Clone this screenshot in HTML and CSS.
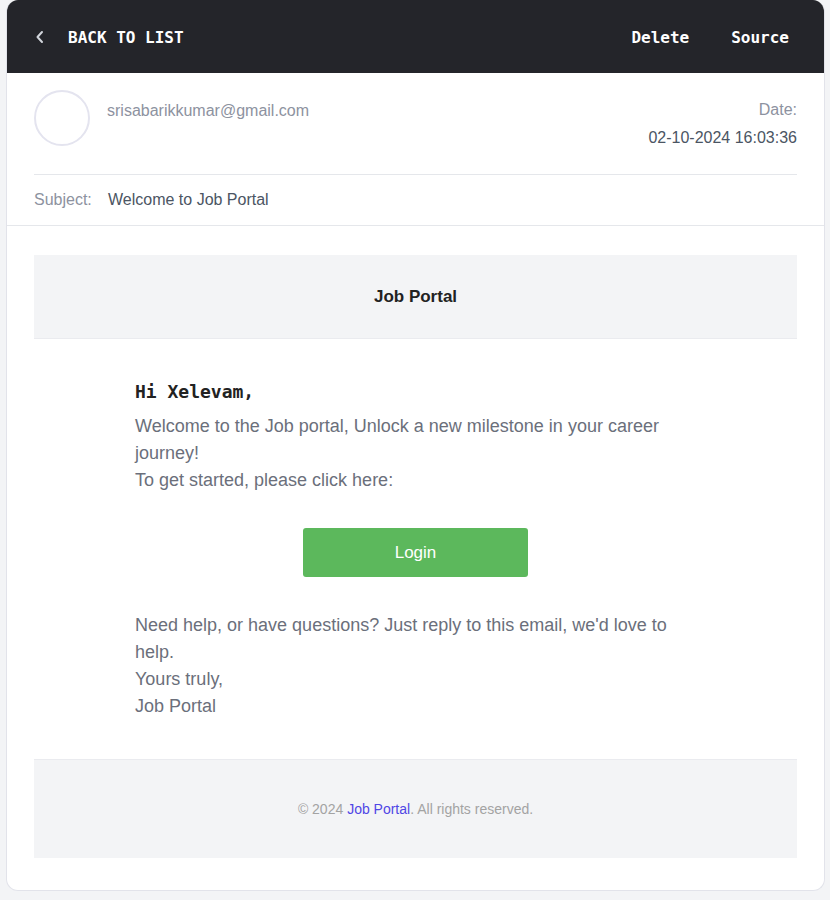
FILE: index.html
```html
<!DOCTYPE html>
<html>
<head>
<meta charset="utf-8">
<link rel="stylesheet" href="styles.css">
</head>
<body>
<div class="card">
  <div class="topbar">
    <a class="back">
      <svg class="chev" width="10" height="14" viewBox="0 0 10 14"><path d="M7 2 L2.5 7 L7 12" fill="none" stroke="#d1d5db" stroke-width="2" stroke-linecap="round" stroke-linejoin="round"/></svg>
      <span>BACK TO LIST</span>
    </a>
    <div class="actions">
      <span>Delete</span>
      <span>Source</span>
    </div>
  </div>
  <div class="meta">
    <div class="from-row">
      <div class="avatar"></div>
      <div class="from">srisabarikkumar@gmail.com</div>
      <div class="date">
        <div class="date-label">Date:</div>
        <div class="date-value">02-10-2024 16:03:36</div>
      </div>
    </div>
    <div class="subject-row">
      <span class="subject-label">Subject:</span>
      <span class="subject-value">Welcome to Job Portal</span>
    </div>
  </div>
  <div class="mail">
    <div class="mail-head">Job Portal</div>
    <div class="mail-body">
      <div class="greet">Hi Xelevam,</div>
      <p class="txt">Welcome to the Job portal, Unlock a new milestone in your career journey!<br>To get started, please click here:</p>
      <div class="btn-wrap"><a class="btn">Login</a></div>
      <p class="txt">Need help, or have questions? Just reply to this email, we'd love to help.<br>Yours truly,<br>Job Portal</p>
    </div>
    <div class="mail-foot"><span>© 2024 <a class="link">Job Portal</a>. All rights reserved.</span></div>
  </div>
</div>
</body>
</html>
```
FILE: styles.css
```css
html, body { margin: 0; padding: 0; }
body {
  background: #f3f4f6;
  font-family: "Liberation Sans", Arial, sans-serif;
  width: 830px;
  height: 900px;
}
.card {
  margin: 0 5px 0 6px;
  background: #fff;
  border: 1px solid #e2e3ea;
  border-top: none;
  border-radius: 12px;
  overflow: hidden;
  height: 891px;
  box-sizing: border-box;
}
.topbar {
  height: 73px;
  background: #24252a;
  display: flex;
  align-items: center;
  justify-content: space-between;
  padding: 0 35px 0 28px;
  font-family: "DejaVu Sans Mono", "Liberation Mono", monospace;
  font-weight: bold;
  font-size: 16px;
  color: #fff;
}
.back { display: flex; align-items: center; gap: 23px; padding-top: 1px; }
.chev { display: block; }
.actions { display: flex; gap: 42px; padding-top: 1px; }
.meta { padding: 0 27px 0 27px; border-bottom: 1px solid #e5e7eb; }
.from-row {
  display: flex;
  align-items: flex-start;
  padding-top: 17px;
  height: 84px;
  border-bottom: 1px solid #e5e7eb;
}
.avatar {
  width: 52px; height: 52px;
  border: 2px solid #e4e4ef;
  border-radius: 50%;
  flex: none;
}
.from {
  margin-left: 17px;
  margin-top: 12px;
  font-size: 16px;
  color: #8d92a0;
  flex: 1;
}
.date { text-align: right; font-size: 16px; line-height: 28px; margin-top: 6px; }
.date-label { color: #8d92a0; }
.date-value { color: #4b5563; }
.subject-row { height: 50px; display: flex; align-items: center; font-size: 16px; }
.subject-label { color: #8d92a0; width: 74px; }
.subject-value { color: #4b5563; }
.mail { padding: 29px 27px 0 27px; }
.mail-head {
  background: #f3f4f6;
  height: 84px;
  display: flex; align-items: center; justify-content: center;
  font-weight: bold;
  font-size: 17px;
  color: #222;
  border-bottom: 1px solid #eaebef;
  box-sizing: border-box;
  padding-top: 1px;
}
.mail-body { width: 561px; margin: 0 auto; padding: 41px 0 39px; }
.greet {
  font-family: "DejaVu Sans Mono", "Liberation Mono", monospace;
  font-weight: bold;
  font-size: 18px;
  color: #222;
  line-height: 24px;
}
.txt { margin: 0; font-size: 18px; line-height: 27px; color: #6b6f7b; }
.greet + .txt { margin-top: 9px; }
.btn-wrap { display: flex; justify-content: center; padding: 34px 0 35px; }
.btn {
  width: 225px; height: 49px;
  background: #5cb85c;
  border-radius: 3px;
  color: #fff;
  font-size: 17px;
  display: flex; align-items: center; justify-content: center;
}
.mail-foot {
  background: #f3f4f6;
  height: 99px;
  border-top: 1px solid #eaebef;
  display: flex; align-items: center; justify-content: center;
  font-size: 14px;
  color: #a3a3a3;
  box-sizing: border-box;
}
.link { color: #4f46e5; }
```
